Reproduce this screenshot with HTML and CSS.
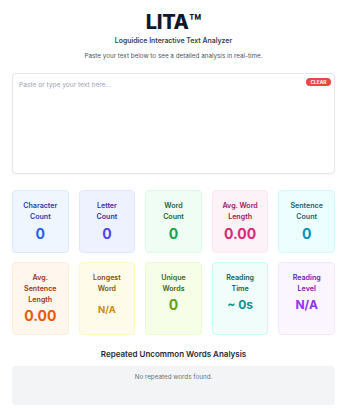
FILE: index.html
```html
<!DOCTYPE html>
<html lang="en">
<head>
<meta charset="utf-8">
<title>LITA</title>
<link rel="stylesheet" href="styles.css">
</head>
<body>
<main class="page">
  <header class="header">
    <h1 class="title">LITA<span class="tm">™</span></h1>
    <p class="subtitle">Loguidice Interactive Text Analyzer</p>
    <p class="intro">Paste your text below to see a detailed analysis in real-time.</p>
  </header>

  <section class="editor">
    <textarea class="input" placeholder="Paste or type your text here..."></textarea>
    <button class="clear" type="button">CLEAR</button>
  </section>

  <section class="stats">
    <div class="card blue"><div class="label">Character<br>Count</div><div class="value">0</div></div>
    <div class="card indigo"><div class="label">Letter<br>Count</div><div class="value">0</div></div>
    <div class="card green"><div class="label">Word<br>Count</div><div class="value">0</div></div>
    <div class="card pink"><div class="label">Avg. Word<br>Length</div><div class="value">0.00</div></div>
    <div class="card cyan"><div class="label">Sentence<br>Count</div><div class="value">0</div></div>
    <div class="card orange"><div class="label">Avg.<br>Sentence<br>Length</div><div class="value">0.00</div></div>
    <div class="card yellow"><div class="label">Longest<br>Word</div><div class="value small">N/A</div></div>
    <div class="card lime"><div class="label">Unique<br>Words</div><div class="value">0</div></div>
    <div class="card teal"><div class="label">Reading<br>Time</div><div class="value mid">~ 0s</div></div>
    <div class="card purple"><div class="label">Reading<br>Level</div><div class="value mid">N/A</div></div>
  </section>

  <section class="repeated">
    <h2 class="repeated-title">Repeated Uncommon Words Analysis</h2>
    <div class="repeated-box">No repeated words found.</div>
  </section>
</main>
</body>
</html>
```

FILE: styles.css
```css
* { box-sizing: border-box; }

html, body {
  margin: 0;
  padding: 0;
  background: #ffffff;
}

body {
  font-family: Inter, "Noto Sans", "Liberation Sans", sans-serif;
  color: #1f2937;
}

.page {
  padding: 10px 12px 0 12px;
}

.header {
  text-align: center;
}

.title {
  margin: 0;
  font-size: 20px;
  line-height: 24px;
  font-weight: 800;
  color: #111827;
  letter-spacing: -0.3px;
}

.tm {
  font-weight: 700;
}

.subtitle {
  margin: 2px 0 0 0;
  font-size: 6.9px;
  line-height: 10px;
  font-weight: 600;
  color: #374151;
}

.intro {
  margin: 6px 0 0 0;
  font-size: 6.3px;
  line-height: 8px;
  color: #4b5563;
}

.editor {
  position: relative;
  margin-top: 13px;
}

.input {
  display: block;
  width: 100%;
  height: 101px;
  margin: 0;
  padding: 6.5px 6px;
  border: 1px solid #e5e7eb;
  border-radius: 4px;
  box-shadow: 0 1px 2px rgba(0, 0, 0, 0.04);
  font-family: Inter, "Noto Sans", sans-serif;
  font-size: 6.6px;
  line-height: 9px;
  color: #374151;
  resize: none;
  outline: none;
}

.input::placeholder {
  color: #9ca3af;
}

.clear {
  position: absolute;
  top: 5px;
  right: 4px;
  width: 25px;
  height: 8px;
  padding: 0;
  border: none;
  border-radius: 8px;
  background: #ef4444;
  color: #ffffff;
  font-family: Inter, "Noto Sans", sans-serif;
  font-size: 4.8px;
  font-weight: 700;
  line-height: 8px;
}

.stats {
  display: grid;
  grid-template-columns: repeat(5, 1fr);
  column-gap: 10px;
  row-gap: 9px;
  margin-top: 16px;
}

.card {
  border: 1px solid;
  border-radius: 4px;
  padding: 9px 2px 8px 2px;
  text-align: center;
  min-height: 62px;
}

.label {
  font-size: 7.1px;
  line-height: 11.3px;
  font-weight: 600;
}

.value {
  margin-top: 1px;
  font-size: 14px;
  line-height: 20px;
  font-weight: 700;
}

.value.small {
  margin-top: 6px;
  font-size: 9.5px;
}

.value.mid {
  font-size: 12px;
}

.blue   { background: #eff6ff; border-color: #dbeafe; }
.blue .label { color: #1e40af; }
.blue .value { color: #2563eb; }

.indigo { background: #eef2ff; border-color: #e0e7ff; }
.indigo .label { color: #3730a3; }
.indigo .value { color: #4f46e5; }

.green  { background: #f0fdf4; border-color: #dcfce7; }
.green .label { color: #166534; }
.green .value { color: #16a34a; }

.pink   { background: #fdf2f8; border-color: #fce7f3; }
.pink .label { color: #9d174d; }
.pink .value { color: #db2777; }

.cyan   { background: #ecfeff; border-color: #cffafe; }
.cyan .label { color: #155e75; }
.cyan .value { color: #0891b2; }

.orange { background: #fff7ed; border-color: #ffedd5; }
.orange .label { color: #9a3412; }
.orange .value { color: #ea580c; }

.yellow { background: #fefce8; border-color: #fef9c3; }
.yellow .label { color: #854d0e; }
.yellow .value { color: #ca8a04; }

.lime   { background: #f7fee7; border-color: #ecfccb; }
.lime .label { color: #3f6212; }
.lime .value { color: #65a30d; }

.teal   { background: #f0fdfa; border-color: #ccfbf1; }
.teal .label { color: #115e59; }
.teal .value { color: #0d9488; }

.purple { background: #faf5ff; border-color: #f3e8ff; }
.purple .label { color: #6b21a8; }
.purple .value { color: #9333ea; }

.repeated {
  margin-top: 13px;
}

.repeated-title {
  margin: 0;
  text-align: center;
  font-size: 8px;
  line-height: 12px;
  font-weight: 600;
  color: #1f2937;
}

.repeated-box {
  margin-top: 6px;
  min-height: 39px;
  padding: 8px 8px;
  border-radius: 4px;
  background: #f3f4f6;
  text-align: center;
  font-size: 6.3px;
  line-height: 7px;
  color: #6b7280;
}
```
